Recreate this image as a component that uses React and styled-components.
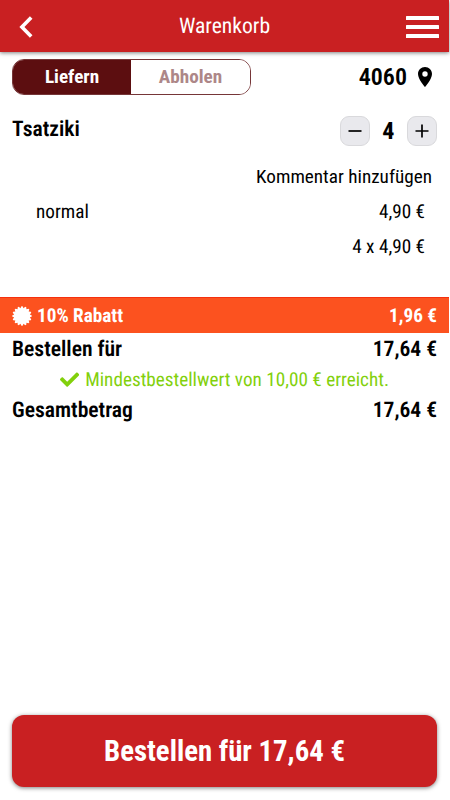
import { useState } from 'react';
import styled, { createGlobalStyle } from 'styled-components';
import { FaCheck } from 'react-icons/fa';

const GlobalStyle = createGlobalStyle`
  * {
    box-sizing: border-box;
  }

  body {
    margin: 0;
    background: #fff;
    color: #000;
    font-family: 'Roboto Condensed', Roboto, 'Liberation Sans', sans-serif;
    font-size: 19.2px;
    font-stretch: 75%;
    text-rendering: geometricPrecision;
  }

  button {
    padding: 0;
    border: 0;
    background: none;
    color: inherit;
    font: inherit;
    cursor: pointer;
  }
`;

const Page = styled.div`
  display: flex;
  flex-direction: column;
  width: 449px;
  height: 800px;
`;

const Header = styled.header`
  display: flex;
  align-items: center;
  justify-content: space-between;
  flex: none;
  height: 52px;
  padding: 1px 10px 0;
  background: #c92022;
  color: #fff;
  box-shadow: 0 1px 4px rgba(0, 0, 0, 0.5);
`;

const Title = styled.h1`
  margin: 0;
  font-size: 21.6px;
  font-weight: 400;
  line-height: 26px;
`;

const IconButton = styled.button`
  display: flex;
  justify-content: center;
  width: 33px;
`;

const TopRow = styled.div`
  display: flex;
  align-items: center;
  justify-content: space-between;
  flex: none;
  height: 36px;
  margin-top: 7px;
  padding: 0 12px;
`;

const Toggle = styled.div`
  display: grid;
  grid-template-columns: 118px 1fr;
  width: 239px;
  height: 36px;
  overflow: hidden;
  border: 1px solid #763638;
  border-radius: 12px;
`;

const ToggleOption = styled.button`
  padding-bottom: 1px;
  background: ${({ $active }) => ($active ? '#5c0e10' : '#fff')};
  color: ${({ $active }) => ($active ? '#fff' : '#ad8788')};
  font-size: 19.2px;
  font-weight: 700;
`;

const Location = styled.button`
  display: flex;
  align-items: center;
  gap: 11px;
  padding-right: 5px;
  font-size: 24px;
  font-weight: 600;
`;

const Item = styled.section`
  flex: none;
  height: 202px;
  padding: 20px 12px 0;
`;

const ItemHead = styled.div`
  display: flex;
  justify-content: space-between;
  height: 31px;
`;

const ItemName = styled.h2`
  margin: 0;
  font-size: 21.6px;
  font-weight: 600;
  line-height: 30px;
`;

const Stepper = styled.div`
  display: flex;
  align-items: center;
  gap: 12.5px;
  font-size: 24px;
  font-weight: 700;
`;

const StepButton = styled.button`
  display: flex;
  align-items: center;
  justify-content: center;
  width: 30px;
  height: 30px;
  border: 1px solid #d9d9dc;
  border-radius: 9px;
  background: #e9e9ed;
`;

const Line = styled.div`
  display: flex;
  justify-content: space-between;
  padding: 0 12px 0 24px;
  line-height: 35px;
`;

const Comment = styled.button`
  display: block;
  margin: 13px 5px 0 auto;
  line-height: 35px;
`;

const Discount = styled.div`
  display: flex;
  align-items: center;
  justify-content: space-between;
  flex: none;
  height: 36px;
  padding: 0 12px;
  border-top: 1px solid #f5300f;
  background: #fc521f;
  color: #fff;
  font-weight: 700;
`;

const DiscountLabel = styled.span`
  display: flex;
  align-items: center;
  gap: 5px;
`;

const Total = styled.div`
  display: flex;
  justify-content: space-between;
  height: 32px;
  padding: 0 12px;
  font-size: 21.6px;
  font-weight: 600;
  line-height: 34px;
`;

const Minimum = styled.p`
  display: flex;
  align-items: center;
  justify-content: center;
  gap: 6px;
  height: 29px;
  margin: 0;
  color: #82d00c;
`;

const OrderButton = styled.button`
  height: 72px;
  margin: auto 12px 13px;
  border-radius: 12px;
  background: #c92022;
  color: #fff;
  font-size: 28.8px;
  font-weight: 700;
  box-shadow: 0 1px 4px rgba(0, 0, 0, 0.5);
`;

function BackIcon() {
  return (
    <svg width="16" height="22" viewBox="0 0 16 22" fill="none" stroke="#fff" strokeWidth="3.6">
      <path d="M12.200 1.500 2.900 11l9.300 9.500" />
    </svg>
  );
}

function MenuIcon() {
  return (
    <svg width="33" height="24" viewBox="0 0 33 24" fill="#fff">
      <rect y="1" width="33" height="4" rx=".5" />
      <rect y="10" width="33" height="4" rx=".5" />
      <rect y="19" width="33" height="4" rx=".5" />
    </svg>
  );
}

function PinIcon() {
  return (
    <svg width="14" height="20" viewBox="5 2 14 20">
      <path d="M12 2C8.1 2 5 5.1 5 9c0 5.2 7 13 7 13s7-7.800 7-13c0-3.900-3.100-7-7-7zm0 9.700a2.700 2.700 0 1 1 0-5.400 2.700 2.700 0 0 1 0 5.400z" />
    </svg>
  );
}

// starburst outline: 16 blunt teeth, two outer points and one inner point each
const burst = Array.from({ length: 16 }, (_, i) => {
  const step = Math.PI / 8;
  return [
    [9.8, (i - 0.15) * step],
    [9.8, (i + 0.15) * step],
    [8, (i + 0.5) * step],
  ]
    .map(([r, a]) => `${(10 + r * Math.sin(a)).toFixed(2)},${(10 - r * Math.cos(a)).toFixed(2)}`)
    .join(' ');
}).join(' ');

function BurstIcon() {
  return (
    <svg width="20" height="20" viewBox="0 0 20 20" fill="#fff">
      <polygon points={burst} />
    </svg>
  );
}

export default function App() {
  const [mode, setMode] = useState('Liefern');
  const [count, setCount] = useState(4);

  const format = (value) => `${value.toFixed(2).replace('.', ',')} €`;
  const price = 4.9;
  const discount = count * price * 0.1;
  const total = format(count * price - discount);

  return (
    <>
      <GlobalStyle />
      <Page>
        <Header>
          <IconButton aria-label="Zurück">
            <BackIcon />
          </IconButton>
          <Title>Warenkorb</Title>
          <IconButton aria-label="Menü">
            <MenuIcon />
          </IconButton>
        </Header>

        <TopRow>
          <Toggle>
            {['Liefern', 'Abholen'].map((option) => (
              <ToggleOption key={option} $active={mode === option} onClick={() => setMode(option)}>
                {option}
              </ToggleOption>
            ))}
          </Toggle>
          <Location>
            4060
            <PinIcon />
          </Location>
        </TopRow>

        <Item>
          <ItemHead>
            <ItemName>Tsatziki</ItemName>
            <Stepper>
              <StepButton aria-label="Weniger" onClick={() => setCount(Math.max(1, count - 1))}>
                <svg width="14" height="14" stroke="#000" strokeWidth="1.7">
                  <path d="M.5 7h13" />
                </svg>
              </StepButton>
              <span>{count}</span>
              <StepButton aria-label="Mehr" onClick={() => setCount(count + 1)}>
                <svg width="14" height="14" stroke="#000" strokeWidth="1.7">
                  <path d="M.5 7h13M7 .5v13" />
                </svg>
              </StepButton>
            </Stepper>
          </ItemHead>
          <Comment>Kommentar hinzufügen</Comment>
          <Line>
            <span>normal</span>
            <span>{format(price)}</span>
          </Line>
          <Line>
            <span />
            <span>
              {count} x {format(price)}
            </span>
          </Line>
        </Item>

        <Discount>
          <DiscountLabel>
            <BurstIcon />
            10% Rabatt
          </DiscountLabel>
          <span>{format(discount)}</span>
        </Discount>
        <Total>
          <span>Bestellen für</span>
          <span>{total}</span>
        </Total>
        <Minimum>
          <FaCheck />
          Mindestbestellwert von 10,00 € erreicht.
        </Minimum>
        <Total>
          <span>Gesamtbetrag</span>
          <span>{total}</span>
        </Total>

        <OrderButton>Bestellen für {total}</OrderButton>
      </Page>
    </>
  );
}
